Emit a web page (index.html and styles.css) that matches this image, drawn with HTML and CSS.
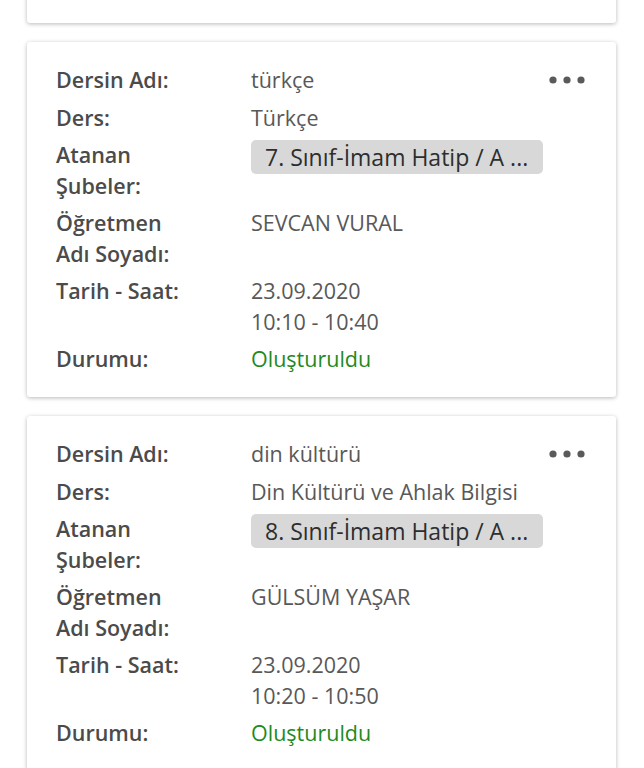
FILE: index.html
```html
<!DOCTYPE html>
<html lang="tr">
<head>
  <meta charset="UTF-8" />
  <meta name="viewport" content="width=device-width, initial-scale=1" />
  <title>Canlı Dersler</title>
  <link rel="stylesheet" href="styles.css">
</head>
<body>
  <div class="liste">

    <div class="kart">
      <dl class="bilgi">
        <dt>Dersin Adı:</dt>
        <dd>matematik</dd>
        <dt>Ders:</dt>
        <dd>Matematik</dd>
        <dt>Atanan Şubeler:</dt>
        <dd><span class="sube">6. Sınıf-İmam Hatip / A ...</span></dd>
        <dt>Öğretmen Adı Soyadı:</dt>
        <dd>AHMET YILMAZ</dd>
        <dt>Tarih - Saat:</dt>
        <dd>23.09.2020<br>10:00 - 10:30</dd>
        <dt>Durumu:</dt>
        <dd class="durum">Oluşturuldu</dd>
      </dl>
      <button class="menu" aria-label="Seçenekler">
        <svg width="38" height="8" viewBox="0 0 38 8"><circle cx="4" cy="4" r="3.6"/><circle cx="18" cy="4" r="3.6"/><circle cx="32" cy="4" r="3.6"/></svg>
      </button>
    </div>

    <div class="kart">
      <dl class="bilgi">
        <dt>Dersin Adı:</dt>
        <dd>türkçe</dd>
        <dt>Ders:</dt>
        <dd>Türkçe</dd>
        <dt>Atanan Şubeler:</dt>
        <dd><span class="sube">7. Sınıf-İmam Hatip / A ...</span></dd>
        <dt>Öğretmen Adı Soyadı:</dt>
        <dd>SEVCAN VURAL</dd>
        <dt>Tarih - Saat:</dt>
        <dd>23.09.2020<br>10:10 - 10:40</dd>
        <dt>Durumu:</dt>
        <dd class="durum">Oluşturuldu</dd>
      </dl>
      <button class="menu" aria-label="Seçenekler">
        <svg width="38" height="8" viewBox="0 0 38 8"><circle cx="4" cy="4" r="3.6"/><circle cx="18" cy="4" r="3.6"/><circle cx="32" cy="4" r="3.6"/></svg>
      </button>
    </div>

    <div class="kart">
      <dl class="bilgi">
        <dt>Dersin Adı:</dt>
        <dd>din kültürü</dd>
        <dt>Ders:</dt>
        <dd>Din Kültürü ve Ahlak Bilgisi</dd>
        <dt>Atanan Şubeler:</dt>
        <dd><span class="sube">8. Sınıf-İmam Hatip / A ...</span></dd>
        <dt>Öğretmen Adı Soyadı:</dt>
        <dd>GÜLSÜM YAŞAR</dd>
        <dt>Tarih - Saat:</dt>
        <dd>23.09.2020<br>10:20 - 10:50</dd>
        <dt>Durumu:</dt>
        <dd class="durum">Oluşturuldu</dd>
      </dl>
      <button class="menu" aria-label="Seçenekler">
        <svg width="38" height="8" viewBox="0 0 38 8"><circle cx="4" cy="4" r="3.6"/><circle cx="18" cy="4" r="3.6"/><circle cx="32" cy="4" r="3.6"/></svg>
      </button>
    </div>

  </div>
</body>
</html>
```

FILE: styles.css
```css
:root {
  --yazi-koyu: #4b4b4b;
  --yazi: #585858;
  --yesil: #1f8a1f;
  --gri-etiket: #d8d8d8;
  --beyaz: #ffffff;
}

body {
  margin: 0;
  background: var(--beyaz);
  font-family: "Open Sans", "Noto Sans", sans-serif;
  font-size: 21.5px;
  line-height: 30.5px;
  overflow: hidden;
}

.liste {
  display: flex;
  flex-direction: column;
  gap: 19.5px;
  width: 589px;
  margin: -332px 0 0 27px;
}

.kart {
  display: flex;
  align-items: flex-start;
  background: var(--beyaz);
  border-radius: 3px;
  padding: 23px 30px 22px 29px;
  box-shadow: 0 1px 4px rgba(0, 0, 0, 0.28);
}

.bilgi {
  flex: 1;
  display: grid;
  grid-template-columns: 195px 1fr;
  row-gap: 7px;
  margin: 0;
}

.bilgi dt {
  font-weight: 600;
  color: var(--yazi-koyu);
  width: 135px;
}

.bilgi dd {
  margin: 0;
  color: var(--yazi);
}

.bilgi .durum {
  color: var(--yesil);
}

.sube {
  display: inline-block;
  width: 292px;
  box-sizing: border-box;
  padding: 0 14px;
  line-height: 34px;
  font-size: 23px;
  color: #2e2e2e;
  background: var(--gri-etiket);
  border-radius: 5px;
  white-space: nowrap;
}

.menu {
  display: flex;
  align-items: center;
  height: 30px;
  padding: 0;
  margin-right: -1px;
  border: none;
  background: none;
  fill: #5a5a5a;
  cursor: pointer;
}
```
